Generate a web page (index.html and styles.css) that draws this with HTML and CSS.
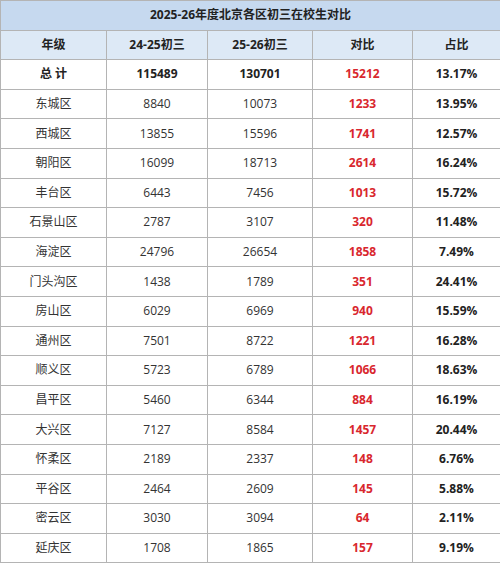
FILE: index.html
```html
<!DOCTYPE html>
<html lang="zh-CN">
<head>
<meta charset="utf-8">
<title>2025-26年度北京各区初三在校生对比</title>
<link rel="stylesheet" href="styles.css">
</head>
<body>
<table class="sheet">
  <colgroup>
    <col class="c1"><col class="c2"><col class="c3"><col class="c4"><col class="c5">
  </colgroup>
  <thead>
    <tr class="title-row"><th colspan="5">2025-26年度北京各区初三在校生对比</th></tr>
    <tr class="head-row"><th>年级</th><th>24-25初三</th><th>25-26初三</th><th>对比</th><th>占比</th></tr>
  </thead>
  <tbody>
    <tr class="total"><td>总 计</td><td>115489</td><td>130701</td><td class="diff">15212</td><td class="pct">13.17%</td></tr>
    <tr><td>东城区</td><td>8840</td><td>10073</td><td class="diff">1233</td><td class="pct">13.95%</td></tr>
    <tr><td>西城区</td><td>13855</td><td>15596</td><td class="diff">1741</td><td class="pct">12.57%</td></tr>
    <tr><td>朝阳区</td><td>16099</td><td>18713</td><td class="diff">2614</td><td class="pct">16.24%</td></tr>
    <tr><td>丰台区</td><td>6443</td><td>7456</td><td class="diff">1013</td><td class="pct">15.72%</td></tr>
    <tr><td>石景山区</td><td>2787</td><td>3107</td><td class="diff">320</td><td class="pct">11.48%</td></tr>
    <tr><td>海淀区</td><td>24796</td><td>26654</td><td class="diff">1858</td><td class="pct">7.49%</td></tr>
    <tr><td>门头沟区</td><td>1438</td><td>1789</td><td class="diff">351</td><td class="pct">24.41%</td></tr>
    <tr><td>房山区</td><td>6029</td><td>6969</td><td class="diff">940</td><td class="pct">15.59%</td></tr>
    <tr><td>通州区</td><td>7501</td><td>8722</td><td class="diff">1221</td><td class="pct">16.28%</td></tr>
    <tr><td>顺义区</td><td>5723</td><td>6789</td><td class="diff">1066</td><td class="pct">18.63%</td></tr>
    <tr><td>昌平区</td><td>5460</td><td>6344</td><td class="diff">884</td><td class="pct">16.19%</td></tr>
    <tr><td>大兴区</td><td>7127</td><td>8584</td><td class="diff">1457</td><td class="pct">20.44%</td></tr>
    <tr><td>怀柔区</td><td>2189</td><td>2337</td><td class="diff">148</td><td class="pct">6.76%</td></tr>
    <tr><td>平谷区</td><td>2464</td><td>2609</td><td class="diff">145</td><td class="pct">5.88%</td></tr>
    <tr><td>密云区</td><td>3030</td><td>3094</td><td class="diff">64</td><td class="pct">2.11%</td></tr>
    <tr><td>延庆区</td><td>1708</td><td>1865</td><td class="diff">157</td><td class="pct">9.19%</td></tr>
  </tbody>
</table>
</body>
</html>
```
FILE: styles.css
```css
html, body {
  margin: 0;
  padding: 0;
  background: #ffffff;
}

body {
  font-family: "Open Sans", "Noto Sans CJK SC", sans-serif;
  font-size: 12px;
  color: #333333;
}

.sheet {
  width: 500px;
  border-collapse: collapse;
  table-layout: fixed;
  border: 1px solid #8c8c8c;
}

.c1 { width: 106px; }
.c2 { width: 101px; }
.c3 { width: 105px; }
.c4 { width: 100px; }
.c5 { width: 88px; }

.sheet th,
.sheet td {
  border: 1px solid #b4b4b4;
  text-align: center;
  vertical-align: middle;
  padding: 0;
  line-height: 16px;
  white-space: nowrap;
}

.sheet tr {
  height: 29.6px;
}

.title-row th {
  background: #c6d9ef;
  font-weight: 700;
  color: #222222;
}

.head-row th {
  background: #dde9f6;
  font-weight: 700;
  color: #222222;
}

.total td {
  font-weight: 700;
  color: #222222;
}

.sheet td.diff {
  color: #d9272e;
  font-weight: 700;
}

.sheet td.pct {
  color: #222222;
  font-weight: 700;
}
```
